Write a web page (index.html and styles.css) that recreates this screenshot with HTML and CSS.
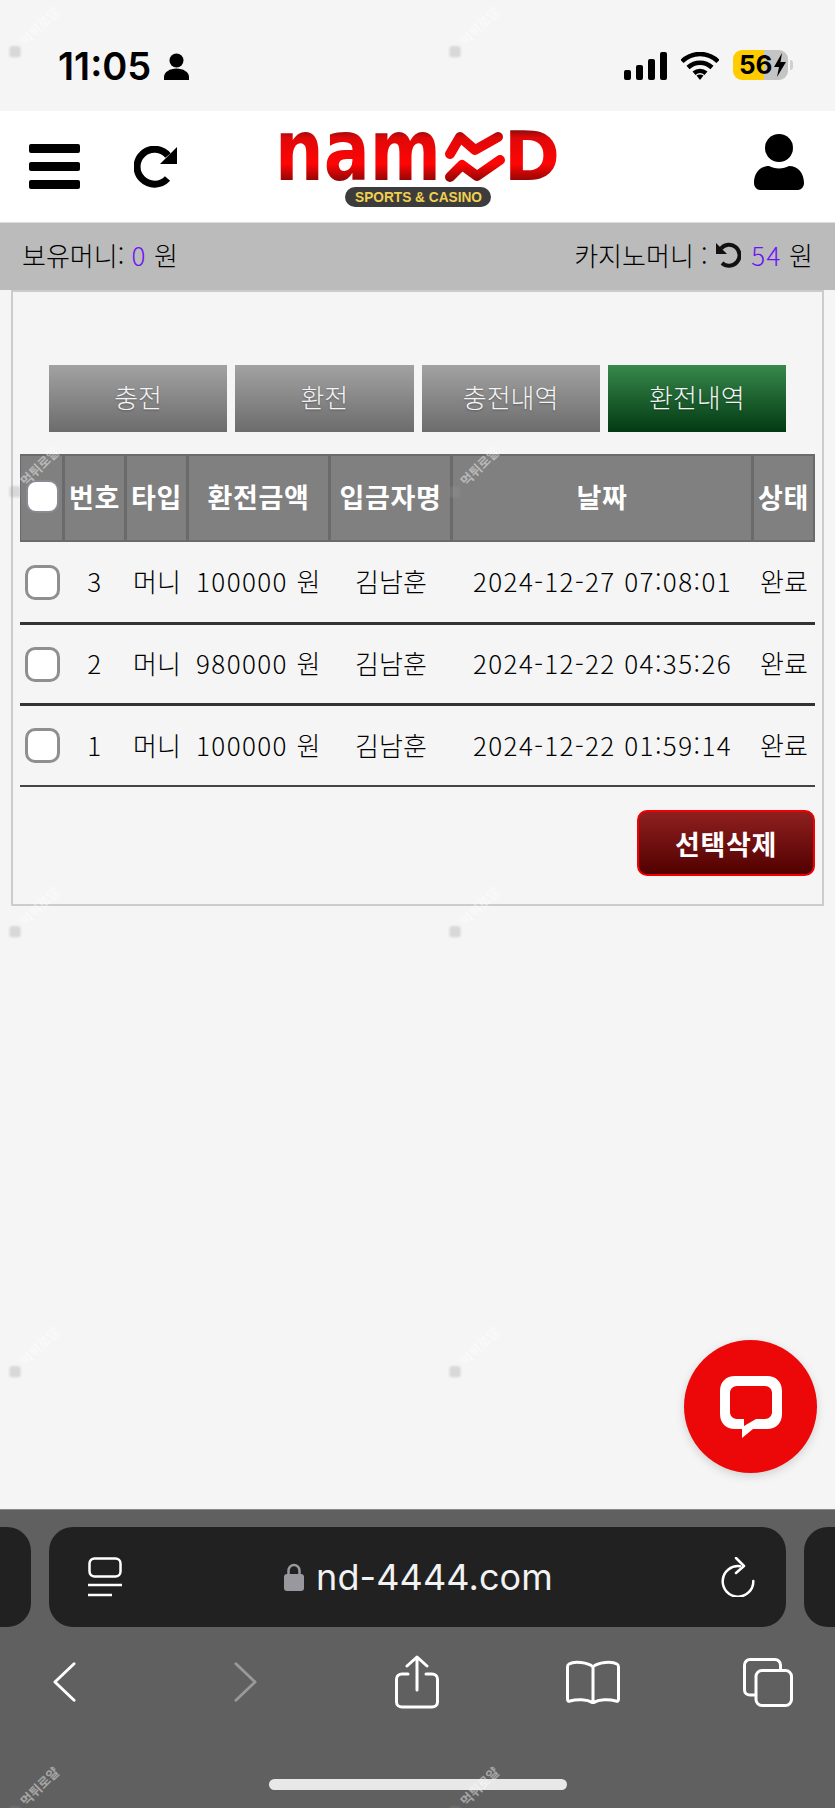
FILE: index.html
```html
<!DOCTYPE html>
<html lang="ko">

<head>
    <meta charset="UTF-8">
    <meta name="viewport" content="width=device-width, initial-scale=1.0">
    <title>환전내역</title>
    <link rel="stylesheet" href="styles.css">
</head>

<body>
    <div class="page">
        <div class="status-bar">
            <div class="status-left">
                <span class="clock">11:05</span>
                <svg class="status-person" viewBox="0 0 25 27"><circle cx="12.5" cy="7.5" r="7"/><path d="M0 27v-3c0-5 6-8.5 12.5-8.5S25 19 25 24v3z"/></svg>
            </div>
            <div class="status-right">
                <div class="signal"><i class="bar1"></i><i class="bar2"></i><i class="bar3"></i><i class="bar4"></i></div>
                <svg class="wifi" viewBox="0 0 38 28"><path d="M1 9.5C11-.5 27-.5 37 9.500M7 15.500c7-6.500 17-6.500 24 0M13 21.200c3.500-3 8.500-3 12 0" fill="none" stroke="#000" stroke-width="4.500"/><path d="M15.500 23.500c2-1.500 5-1.500 7 0L19 28z"/></svg>
                <div class="battery"><span class="battery-num">56</span><svg class="bolt" viewBox="0 0 12 24"><path d="M8 0L0 14h5l-2 10 9-15H6.500z"/></svg></div>
                <div class="battery-cap"></div>
            </div>
        </div>

        <header class="top-header">
            <div class="hamburger"><span></span><span></span><span></span></div>
            <svg class="reload" viewBox="0 0 44 44"><path d="M33.500 32.500A17.500 17.500 0 1 1 34 9.500" fill="none" stroke="#000" stroke-width="7"/><path d="M43 1v17H26z"/></svg>
            <svg class="logo" viewBox="0 0 282 78">
                <defs>
                    <linearGradient id="redFill" gradientUnits="userSpaceOnUse" x1="0" y1="0" x2="0" y2="52">
                        <stop offset="0" stop-color="#8c0c0c"/>
                        <stop offset="0.15" stop-color="#e00808"/>
                        <stop offset="0.65" stop-color="#ff0505"/>
                        <stop offset="1" stop-color="#8a0606"/>
                    </linearGradient>
                </defs>
                <text class="logo-word" x="-3" y="50" font-size="85" textLength="166" lengthAdjust="spacingAndGlyphs">nam</text>
                <path d="M172 24L182 7l15 13 23-13M172 47l12-12 15 11 23-16" fill="none" stroke="url(#redFill)" stroke-width="10" stroke-linecap="round" stroke-linejoin="round"/>
                <text class="logo-word" x="226" y="50" font-size="68" textLength="56" lengthAdjust="spacingAndGlyphs">D</text>
                <rect x="67" y="57" width="146" height="20" rx="10" fill="#3c3c3c"/>
                <text class="logo-sub" x="77" y="72" font-size="15" textLength="127" lengthAdjust="spacingAndGlyphs">SPORTS &amp; CASINO</text>
            </svg>
            <svg class="user" viewBox="0 0 50 56"><circle cx="25" cy="14" r="14"/><path d="M0 49c0-10 6-17 15-17 3 1.500 6 2.500 10 2.500s7-1 10-2.500c9 0 15 7 15 17 0 4-3 7-6 7H6c-3 0-6-3-6-7z"/></svg>
        </header>

        <div class="balance-bar">
            <div>보유머니: <span class="money">0</span> 원</div>
            <div class="casino">카지노머니 :
                <svg class="casino-reset" viewBox="0 0 26 26"><path d="M6 6.500A10.500 10.500 0 1 1 7 21" fill="none" stroke="#111" stroke-width="4"/><path d="M1 1v11h11z" fill="#111"/></svg>
                <span class="money">54</span> 원
            </div>
        </div>

        <main class="panel">
            <nav class="tabs">
                <a class="tab">충전</a>
                <a class="tab">환전</a>
                <a class="tab">충전내역</a>
                <a class="tab active">환전내역</a>
            </nav>

            <table class="history">
                <colgroup>
                    <col class="col-check">
                    <col class="col-no">
                    <col class="col-type">
                    <col class="col-amount">
                    <col class="col-name">
                    <col class="col-date">
                    <col class="col-state">
                </colgroup>
                <thead>
                    <tr>
                        <th><input type="checkbox" class="check check-all"></th>
                        <th>번호</th>
                        <th>타입</th>
                        <th>환전금액</th>
                        <th>입금자명</th>
                        <th>날짜</th>
                        <th>상태</th>
                    </tr>
                </thead>
                <tbody>
                    <tr>
                        <td><input type="checkbox" class="check"></td>
                        <td class="num">3</td>
                        <td>머니</td>
                        <td class="num">100000 원</td>
                        <td>김남훈</td>
                        <td class="num">2024-12-27 07:08:01</td>
                        <td>완료</td>
                    </tr>
                    <tr>
                        <td><input type="checkbox" class="check"></td>
                        <td class="num">2</td>
                        <td>머니</td>
                        <td class="num">980000 원</td>
                        <td>김남훈</td>
                        <td class="num">2024-12-22 04:35:26</td>
                        <td>완료</td>
                    </tr>
                    <tr>
                        <td><input type="checkbox" class="check"></td>
                        <td class="num">1</td>
                        <td>머니</td>
                        <td class="num">100000 원</td>
                        <td>김남훈</td>
                        <td class="num">2024-12-22 01:59:14</td>
                        <td>완료</td>
                    </tr>
                </tbody>
            </table>

            <div class="actions">
                <button type="button" class="delete-button">선택삭제</button>
            </div>
        </main>

        <div class="browser-bar">
            <div class="url-row">
                <div class="url-side url-side-left"></div>
                <div class="url-main">
                    <svg class="page-menu" viewBox="0 0 34 40"><rect x="1.500" y="1.500" width="31" height="18" rx="5" fill="none" stroke="#fff" stroke-width="2.500"/><path d="M0 28h34M0 38h24" fill="none" stroke="#fff" stroke-width="2.500"/></svg>
                    <div class="url-text">
                        <svg class="lock" viewBox="0 0 20 28"><path d="M4.500 13V7.500a5.500 5.500 0 0 1 11 0V13" fill="none" stroke="#98989e" stroke-width="2.500"/><rect y="11" width="20" height="17" rx="3" fill="#98989e"/></svg>
                        <span>nd-4444.com</span>
                    </div>
                    <svg class="url-reload" viewBox="0 0 34 40"><path d="M19 9.200A15.300 15.300 0 1 0 32.300 24" fill="none" stroke="#fff" stroke-width="2.500" stroke-linecap="round"/><path d="M15 1l8 8-8 7" fill="none" stroke="#fff" stroke-width="2.500" stroke-linecap="round" stroke-linejoin="round"/></svg>
                </div>
                <div class="url-side url-side-right"></div>
            </div>
            <div class="nav-row">
                <svg class="nav-chevron" viewBox="0 0 24 42"><path d="M22 2L2 21l20 19" fill="none" stroke="#fff" stroke-width="3" stroke-linecap="round" stroke-linejoin="round"/></svg>
                <svg class="nav-chevron" viewBox="0 0 24 42"><path d="M2 2l20 19L2 40" fill="none" stroke="#999" stroke-width="3" stroke-linecap="round" stroke-linejoin="round"/></svg>
                <svg class="nav-share" viewBox="0 0 44 54"><path d="M13 19H7c-3 0-5.500 2-5.500 5v23c0 3 2.500 5 5.500 5h30c3 0 5.500-2 5.500-5V24c0-3-2.500-5-5.500-5h-6M22 35V3M12 11l10-9 10 9" fill="none" stroke="#fff" stroke-width="3" stroke-linecap="round" stroke-linejoin="round"/></svg>
                <svg class="nav-book" viewBox="0 0 54 44"><path d="M27 7C22 2 8 1 3 4c-1 .500-1.500 1.500-1.500 3v32c0 2 1 2.500 2.500 2 7-2 17-2 23 2 6-4 16-4 23-2 1.500.500 2.500 0 2.500-2V7c0-1.500-.500-2.500-1.500-3-5-3-19-2-24 3zM27 7v36" fill="none" stroke="#fff" stroke-width="3" stroke-linejoin="round"/></svg>
                <svg class="nav-tabs" viewBox="0 0 50 49"><path d="M12 37H7c-3 0-5.500-2-5.500-5V7c0-3 2.500-5.500 5.500-5.500h25c3 0 5.500 2.500 5.500 5.500v5" fill="none" stroke="#fff" stroke-width="3"/><rect x="13" y="12.500" width="35.500" height="35" rx="6" fill="none" stroke="#fff" stroke-width="3"/></svg>
            </div>
            <div class="home-indicator"></div>
        </div>

        <a class="chat-button">
            <svg viewBox="0 0 62 62"><path d="M15 0h32c9 0 15 6 15 15v23c0 9-6 15-15 15H33L22 62v-9h-7C6 53 0 47 0 38V15C0 6 6 0 15 0zM17 10c-4 0-7 3-7 7v19c0 4 3 7 7 7h7v7l12-7h9c4 0 7-3 7-7V17c0-4-3-7-7-7z" fill="#fff" fill-rule="evenodd"/></svg>
        </a>

        <div class="watermarks">
            <div class="mark"><span class="mark-in"><i></i>먹튀로얄</span></div>
            <div class="mark"><span class="mark-in"><i></i>먹튀로얄</span></div>
            <div class="mark"><span class="mark-in"><i></i>먹튀로얄</span></div>
            <div class="mark"><span class="mark-in"><i></i>먹튀로얄</span></div>
            <div class="mark"><span class="mark-in"><i></i>먹튀로얄</span></div>
            <div class="mark"><span class="mark-in"><i></i>먹튀로얄</span></div>
            <div class="mark"><span class="mark-in"><i></i>먹튀로얄</span></div>
            <div class="mark"><span class="mark-in"><i></i>먹튀로얄</span></div>
            <div class="mark"><span class="mark-in"><i></i>먹튀로얄</span></div>
            <div class="mark"><span class="mark-in"><i></i>먹튀로얄</span></div>
        </div>
    </div>
</body>

</html>
```

FILE: styles.css
```css
body {
    margin: 0;
    background-color: #f5f5f5;
    font-family: "Noto Sans CJK KR", "Noto Sans", sans-serif;
    font-weight: 300;
    color: #000;
}

.page {
    position: relative;
    display: flex;
    flex-direction: column;
    height: 1808px;
    overflow: hidden;
}

/* phone status bar */
.status-bar {
    flex: 0 0 111px;
    display: flex;
    justify-content: space-between;
    box-sizing: border-box;
    padding: 50px 42px 0 58px;
}

.status-left {
    display: flex;
    align-items: flex-start;
    gap: 13px;
}

.clock {
    font-family: Inter, sans-serif;
    font-size: 38px;
    font-weight: 600;
    line-height: 32px;
    color: #000;
}

.status-person {
    width: 25px;
    height: 27px;
    margin-top: 3px;
}

.status-right {
    display: flex;
    align-items: flex-start;
}

.signal {
    display: flex;
    align-items: flex-end;
    gap: 5px;
    height: 28px;
    margin-top: 2px;
}

.signal i {
    display: block;
    width: 7px;
    background: #000;
    border-radius: 2px;
}

.bar1 { height: 10px; }
.bar2 { height: 15px; }
.bar3 { height: 21px; }
.bar4 { height: 28px; }

.wifi {
    width: 38px;
    height: 28px;
    margin: 2px 0 0 14px;
}

.battery {
    display: flex;
    align-items: center;
    width: 55px;
    height: 30px;
    margin-left: 14px;
    padding-left: 6px;
    box-sizing: border-box;
    border-radius: 9px;
    background: linear-gradient(90deg, #ffcc00 56%, #c4c4c4 56%);
}

.battery-num {
    font-family: Inter, sans-serif;
    font-size: 26px;
    font-weight: 700;
    line-height: 30px;
    color: #000;
}

.bolt {
    width: 12px;
    height: 24px;
    margin-left: 1px;
}

.battery-cap {
    width: 3px;
    height: 10px;
    margin: 10px 0 0 2px;
    background: #d0d0d0;
    border-radius: 0 3px 3px 0;
}

/* site header */
.top-header {
    flex: 0 0 111px;
    display: flex;
    align-items: center;
    padding: 0 31px 0 29px;
    background: #fff;
}

.hamburger {
    display: flex;
    flex-direction: column;
    gap: 9px;
    width: 51px;
}

.hamburger span {
    height: 9px;
    background: #000;
    border-radius: 2px;
}

.reload {
    width: 44px;
    height: 44px;
    margin: 3px 0 0 54px;
}

.logo {
    width: 282px;
    height: 78px;
    margin: 4px 0 0 100px;
    overflow: visible;
}

.logo-word {
    font-family: "DejaVu Sans", sans-serif;
    font-weight: 700;
    fill: url(#redFill);
}

.logo-sub {
    font-family: "Liberation Sans", sans-serif;
    font-weight: 700;
    fill: #f0d050;
}

.user {
    width: 50px;
    height: 56px;
    margin: -9px 0 0 auto;
}

.balance-bar {
    flex: 0 0 68px;
    display: flex;
    justify-content: space-between;
    align-items: center;
    box-sizing: border-box;
    padding: 0 22px 5px;
    border-top: 1px solid #ddd;
    background: #bbbbbb;
    font-size: 26px;
}

.casino-reset {
    width: 26px;
    height: 26px;
    margin: 0 3px 0 0;
    vertical-align: -2px;
}

.money {
    color: #6a14f5;
    letter-spacing: 1.4px;
}

/* main box */
.panel {
    box-sizing: border-box;
    width: 813px;
    height: 616px;
    margin-left: 11px;
    padding: 73px 7px 0;
    border: 2px solid #cccccc;
}

.tabs {
    display: flex;
    gap: 8px;
    padding: 0 29px;
}

.tab {
    flex: 1;
    height: 67px;
    line-height: 63px;
    text-align: center;
    font-size: 26px;
    color: #f4f4f4;
    text-shadow: 0 1px 2px rgba(0, 0, 0, 0.3);
    background: linear-gradient(#a2a2a2, #6c6c6c);
}

.tab.active {
    background: linear-gradient(#38884c, #023a12);
}

.history {
    width: 795px;
    margin-top: 22px;
    table-layout: fixed;
    border-collapse: separate;
    border-spacing: 0;
    font-size: 26px;
}

.col-check { width: 44px; }
.col-no { width: 62px; }
.col-type { width: 62px; }
.col-amount { width: 142px; }
.col-name { width: 122px; }
.col-date { width: 301px; }
.col-state { width: 62px; }

.history th {
    box-sizing: border-box;
    height: 88px;
    padding: 0 0 4px;
    border: 2px solid #6a6a6a;
    border-left-width: 1px;
    background: #808080;
    color: #fff;
    font-size: 27px;
    font-weight: 700;
    letter-spacing: 0.7px;
}

.history td {
    box-sizing: border-box;
    height: 81px;
    padding: 0 0 3px;
    text-align: center;
    border-bottom: 3px solid #333;
    white-space: nowrap;
}

.history td:first-child {
    padding: 0;
}

.history tr:first-child td {
    height: 83px;
}

.history tr:last-child td {
    border-bottom: 2px solid #444;
}

.history td.num {
    letter-spacing: 1.4px;
}

.check {
    appearance: none;
    display: block;
    box-sizing: border-box;
    width: 35px;
    height: 35px;
    margin: 0 0 0 5px;
    border: 3px solid #8f8f8f;
    border-radius: 10px;
    background: #fff;
}

.check-all {
    width: 29px;
    height: 29px;
    margin-left: 7px;
    border: 0;
    border-radius: 8px;
    box-shadow: 0 0 0 2px #8a8a92;
}

.actions {
    display: flex;
    justify-content: flex-end;
    margin-top: 23px;
}

.delete-button {
    width: 178px;
    height: 66px;
    padding: 0;
    border: 2px solid #f00000;
    border-radius: 10px;
    background: linear-gradient(#8f2020, #520000);
    color: #fff;
    font-family: inherit;
    font-size: 27px;
    font-weight: 700;
    letter-spacing: 0.7px;
}

/* safari toolbar */
.browser-bar {
    flex: 0 0 299px;
    margin-top: auto;
    border-top: 1px solid #8a8a8a;
    box-sizing: border-box;
    background: #606060;
    display: flex;
    flex-direction: column;
}

.url-row {
    display: flex;
    gap: 18px;
    height: 100px;
    margin-top: 17px;
}

.url-side {
    flex: 0 0 31px;
    background: #212121;
}

.url-side-left {
    border-radius: 0 24px 24px 0;
}

.url-side-right {
    border-radius: 24px 0 0 24px;
}

.url-main {
    flex: 1;
    display: flex;
    align-items: center;
    justify-content: space-between;
    padding: 0 31px 0 39px;
    background: #212121;
    border-radius: 24px;
}

.page-menu,
.url-reload {
    width: 34px;
    height: 40px;
}

.url-text {
    display: flex;
    align-items: center;
    gap: 12px;
    font-family: Inter, sans-serif;
    font-size: 36px;
    font-weight: 400;
    letter-spacing: 0.1px;
    color: #f2f2f2;
    margin-right: 6px;
}

.lock {
    width: 20px;
    height: 28px;
}

.nav-row {
    display: grid;
    grid-template-columns: 181px 161px 171px 177px auto;
    align-items: center;
    height: 64px;
    margin-top: 23px;
    padding-left: 53px;
}

.nav-chevron {
    width: 23px;
    height: 42px;
}

.nav-share {
    width: 44px;
    height: 54px;
    margin-top: -1px;
}

.nav-book {
    width: 54px;
    height: 44px;
}

.nav-tabs {
    width: 50px;
    height: 49px;
}

.home-indicator {
    width: 298px;
    height: 11px;
    margin: 65px 0 0 269px;
    background: #e8e8e8;
    border-radius: 6px;
}

/* floating stuff */
.chat-button {
    position: absolute;
    left: 684px;
    top: 1340px;
    display: flex;
    align-items: center;
    justify-content: center;
    width: 133px;
    height: 133px;
    border-radius: 50%;
    background: #ec0808;
    box-shadow: 0 3px 10px rgba(0, 0, 0, 0.15);
}

.chat-button svg {
    width: 62px;
    height: 62px;
}

.watermarks {
    position: absolute;
    top: 0;
    left: 0;
    width: 835px;
    height: 1808px;
    overflow: hidden;
    pointer-events: none;
    display: grid;
    grid-template-columns: 440px 395px;
    grid-auto-rows: 440px;
}

.mark {
    padding: 37px 0 0 9px;
}

.mark-in {
    display: inline-flex;
    align-items: center;
    gap: 6px;
    font-size: 13px;
    font-weight: 700;
    line-height: 14px;
    color: rgba(255, 255, 255, 0.45);
    transform: rotate(-45deg);
    transform-origin: 6px 7px;
}

.mark-in i {
    display: block;
    width: 11px;
    height: 11px;
    border-radius: 2px;
    background: rgba(150, 150, 150, 0.3);
    filter: blur(1px);
    transform: rotate(45deg);
}
```
